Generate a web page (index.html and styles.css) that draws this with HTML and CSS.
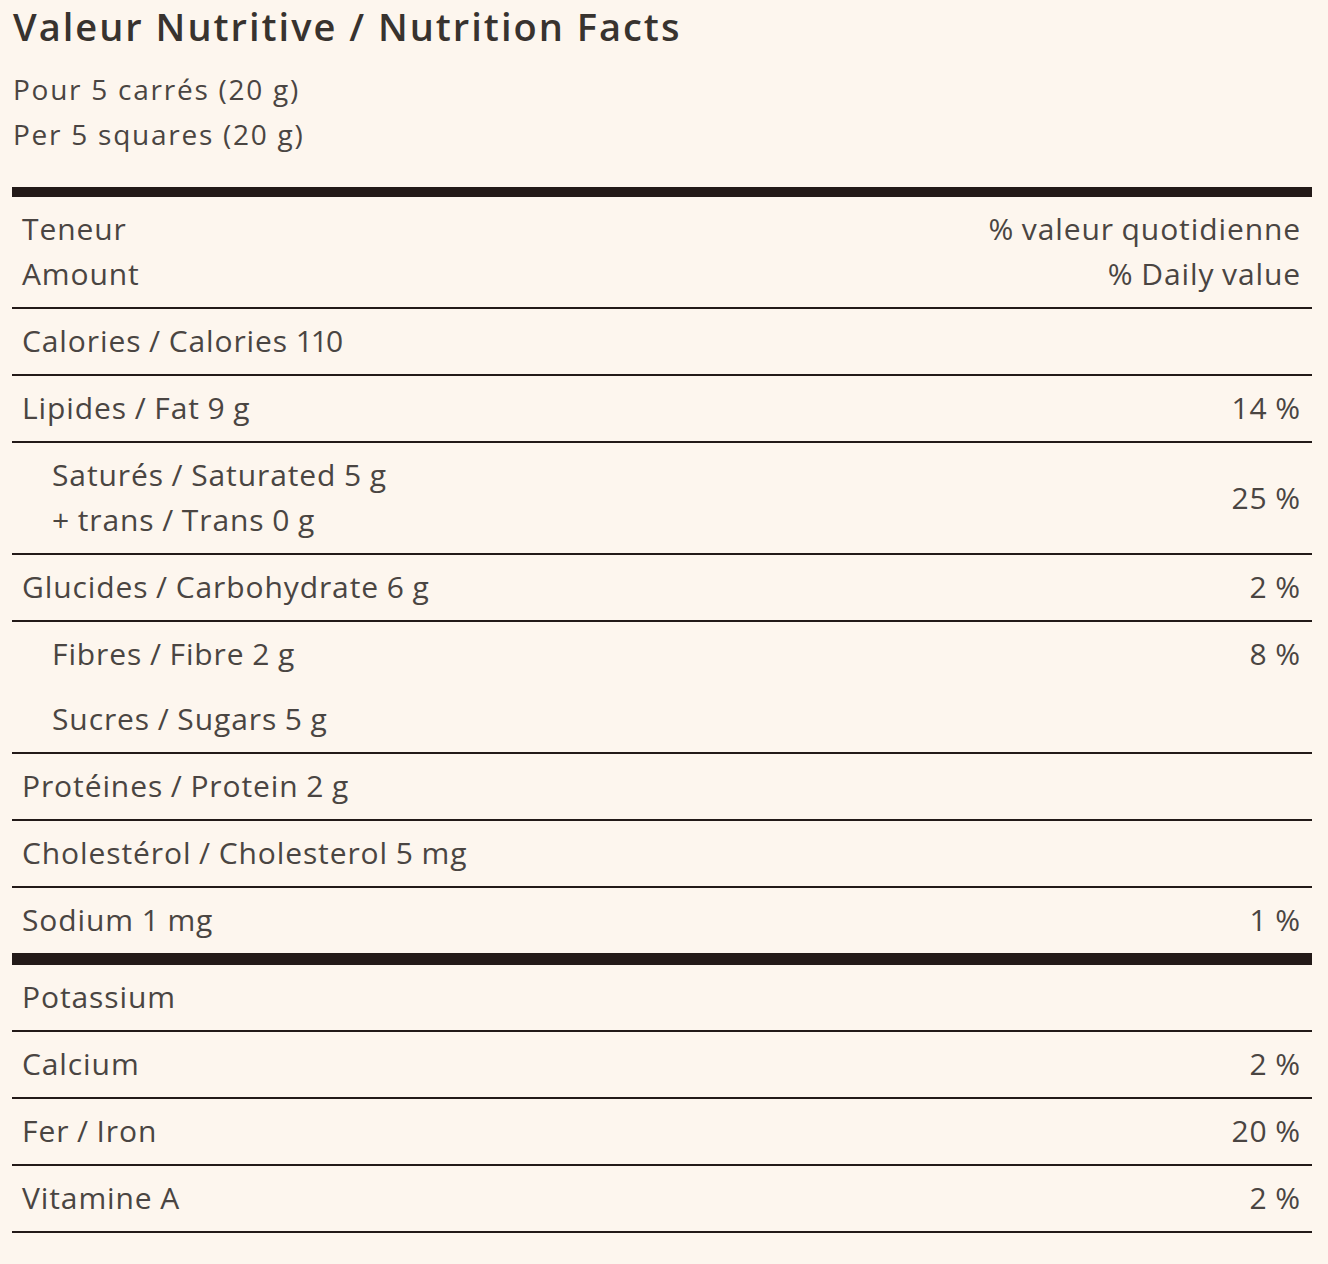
FILE: index.html
```html
<!DOCTYPE html>
<html lang="fr">
<head>
<meta charset="utf-8">
<title>Valeur Nutritive / Nutrition Facts</title>
<link rel="stylesheet" href="styles.css">
</head>
<body>
<div class="page">
  <h1 class="title">Valeur Nutritive / Nutrition Facts</h1>
  <div class="serving">
    <div>Pour 5 carrés (20 g)</div>
    <div>Per 5 squares (20 g)</div>
  </div>
  <div class="facts">
    <div class="row head">
      <div class="lbl"><div>Teneur</div><div>Amount</div></div>
      <div class="val"><div>% valeur quotidienne</div><div>% Daily value</div></div>
    </div>
    <div class="row"><div class="lbl">Calories / Calories <span class="num">110</span></div></div>
    <div class="row"><div class="lbl">Lipides / Fat 9 g</div><div class="val">14 %</div></div>
    <div class="row sub">
      <div class="lbl"><div>Saturés / Saturated 5 g</div><div>+ trans / Trans 0 g</div></div>
      <div class="val">25 %</div>
    </div>
    <div class="row"><div class="lbl">Glucides / Carbohydrate 6 g</div><div class="val">2 %</div></div>
    <div class="group">
      <div class="row sub plain"><div class="lbl">Fibres / Fibre 2 g</div><div class="val">8 %</div></div>
      <div class="row sub plain"><div class="lbl">Sucres / Sugars 5 g</div></div>
    </div>
    <div class="row"><div class="lbl">Protéines / Protein 2 g</div></div>
    <div class="row"><div class="lbl">Cholestérol / Cholesterol 5 mg</div></div>
    <div class="row"><div class="lbl">Sodium 1 mg</div><div class="val">1 %</div></div>
    <div class="row thick"><div class="lbl">Potassium</div></div>
    <div class="row"><div class="lbl">Calcium</div><div class="val">2 %</div></div>
    <div class="row"><div class="lbl">Fer / Iron</div><div class="val">20 %</div></div>
    <div class="row"><div class="lbl">Vitamine A</div><div class="val">2 %</div></div>
  </div>
</div>
</body>
</html>
```
FILE: styles.css
```css
html, body {
  margin: 0;
  padding: 0;
  background: #fdf6ee;
}

.page {
  padding: 3px 16px 0 12px;
  font-family: "Open Sans", "Liberation Sans", sans-serif;
  color: #4a4542;
}

.title {
  margin: 0 0 18px 1px;
  font-size: 38px;
  line-height: 46px;
  font-weight: 600;
  letter-spacing: 2px;
  color: #38332f;
}

.serving {
  margin: 0 0 30px 1px;
  font-size: 28px;
  line-height: 45px;
  font-weight: 400;
  letter-spacing: 1.75px;
  color: #4a4542;
}

.facts {
  width: 1300px;
  border-top: 10px solid #231a18;
}

.row {
  display: flex;
  justify-content: space-between;
  align-items: center;
  padding: 9px 11px 11px 10px;
  font-size: 30px;
  line-height: 45px;
  letter-spacing: 0.9px;
  word-spacing: -1px;
  border-bottom: 2px solid #231a18;
}

.num {
  letter-spacing: -2px;
}

.row.sub {
  padding-left: 40px;
}

.row.plain {
  border-bottom: none;
}

.group {
  border-bottom: 2px solid #231a18;
}

.row.thick {
  border-top: 10px solid #231a18;
}

.val {
  text-align: right;
}
```
